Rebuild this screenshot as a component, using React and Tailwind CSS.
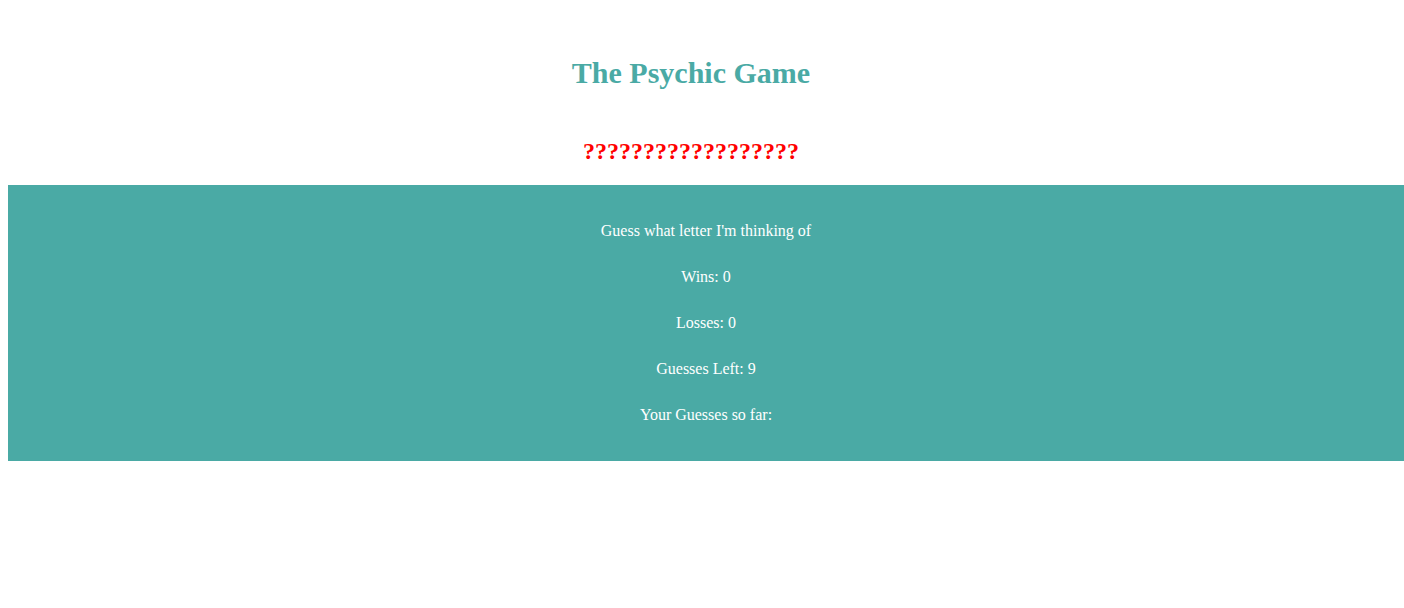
const stats = [
  { label: 'Wins', value: 0 },
  { label: 'Losses', value: 0 },
  { label: 'Guesses Left', value: 9 },
  { label: 'Your Guesses so far', value: '' },
];

export default function App() {
  return (
    <main className="min-h-screen bg-white pl-2 font-['Liberation_Serif',serif] text-base">
      <header className="pt-14 pr-[30px] text-center">
        <h1 className="text-[30px] leading-[34px] font-bold text-[#4aaaa5]">The Psychic Game</h1>
        <h2 className="pt-12 pb-5 text-2xl leading-[27px] font-bold text-[#ff0000]">??????????????????</h2>
      </header>
      <section className="flex flex-col gap-7 bg-[#4aaaa5] py-[37px] text-center text-base leading-[18px] text-white">
        <p>Guess what letter I'm thinking of</p>
        {stats.map((s) => (
          <p key={s.label}>
            {s.label}: {s.value}
          </p>
        ))}
      </section>
    </main>
  );
}
